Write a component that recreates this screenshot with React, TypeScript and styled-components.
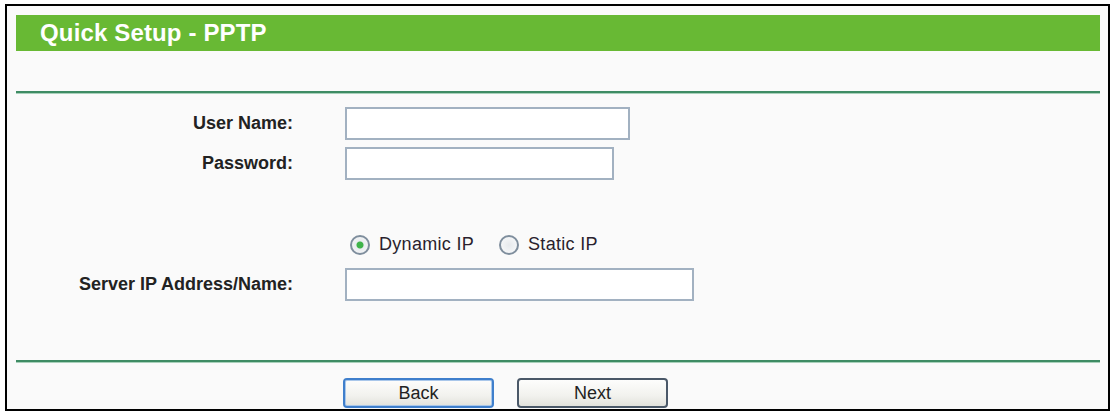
import React, { ReactElement, useState } from "react";
import styled, { createGlobalStyle } from "styled-components";

const GlobalStyle = createGlobalStyle`
	body {
		margin: 0;
		background: #ffffff;
		font-family: "Liberation Sans", Arial, sans-serif;
	}
`;

export default function App(): ReactElement {
	const [mode, setMode] = useState("dynamic");

	return (
		<>
			<GlobalStyle />
			<Frame>
				<Header>Quick Setup - PPTP</Header>
				<Divider top={40} />
				<Row top={13}>
					<Label>User Name:</Label>
					<Field w={285} />
				</Row>
				<Row top={7}>
					<Label>Password:</Label>
					<Field w={269} type="password" />
				</Row>
				<Row top={48}>
					<Label />
					<Choice onClick={() => setMode("dynamic")}>
						<Dot checked={mode === "dynamic"} />
						Dynamic IP
					</Choice>
					<Choice onClick={() => setMode("static")}>
						<Dot checked={mode === "static"} />
						Static IP
					</Choice>
				</Row>
				<Row top={7}>
					<Label>Server IP Address/Name:</Label>
					<Field w={349} />
				</Row>
				<Divider top={59} />
				<Buttons>
					<Button primary>Back</Button>
					<Button>Next</Button>
				</Buttons>
			</Frame>
		</>
	);
}

const Frame = styled.div`
	margin: 4px 0 0 5px;
	width: 1105px;
	height: 407px;
	box-sizing: border-box;
	border: 2px solid #000;
	background: #fafafa;
	padding: 9px 8px 0 9px;
	display: flex;
	flex-direction: column;
`;

const Header = styled.div`
	height: 36px;
	background: #68b934;
	color: #fff;
	font-size: 24px;
	font-weight: bold;
	line-height: 36px;
	padding-left: 24px;
	letter-spacing: 0.15px;
`;

const Divider = styled.div<{ top: number }>`
	margin-top: ${(p) => p.top}px;
	height: 2px;
	background: #3f8c64;
	border-bottom: 1px solid #a9d1bb;
`;

const Row = styled.div<{ top: number }>`
	margin-top: ${(p) => p.top}px;
	height: 33px;
	display: flex;
	align-items: center;
`;

const Label = styled.div`
	width: 277px;
	margin-right: 52px;
	text-align: right;
	font-size: 18px;
	font-weight: bold;
	color: #222;
	flex-shrink: 0;
`;

const Field = styled.input<{ w: number }>`
	width: ${(p) => p.w}px;
	height: 33px;
	box-sizing: border-box;
	border: 2px solid #a2b1c1;
	background: #fff;
	font-size: 16px;
	font-family: "Liberation Sans", Arial, sans-serif;
	outline: none;
	margin: 0;
`;

const Choice = styled.label`
	display: flex;
	align-items: center;
	font-size: 18px;
	color: #2a1f2e;
	margin-right: 20px;
	margin-left: 5px;
	letter-spacing: 0.3px;
	cursor: pointer;
`;

const Dot = styled.span<{ checked: boolean }>`
	width: 20px;
	height: 20px;
	box-sizing: border-box;
	border-radius: 50%;
	border: 2px solid #7f8e9d;
	background: ${(p) =>
		p.checked
			? "radial-gradient(circle, #3fb34a 0 3px, #e9ecef 4px, #f7f8f9 100%)"
			: "radial-gradient(circle, #e6e9ec 0, #fafbfc 100%)"};
	margin-right: 9px;
`;

const Buttons = styled.div`
	margin-top: 15px;
	display: flex;
	gap: 23px;
	padding-left: 327px;
`;

const Button = styled.button<{ primary?: boolean }>`
	width: 151px;
	height: 30px;
	box-sizing: border-box;
	border-radius: 4px;
	border: 2px solid ${(p) => (p.primary ? "#3f7fcc" : "#4a5868")};
	background: linear-gradient(#fdfdfc, #f2f2ee 60%, #e2e2dc);
	font-size: 18px;
	font-family: "Liberation Sans", Arial, sans-serif;
	color: #222;
	padding: 0;
	line-height: 26px;
	box-shadow: ${(p) => (p.primary ? "inset 0 0 0 1px #a9c7ea" : "none")};
`;
